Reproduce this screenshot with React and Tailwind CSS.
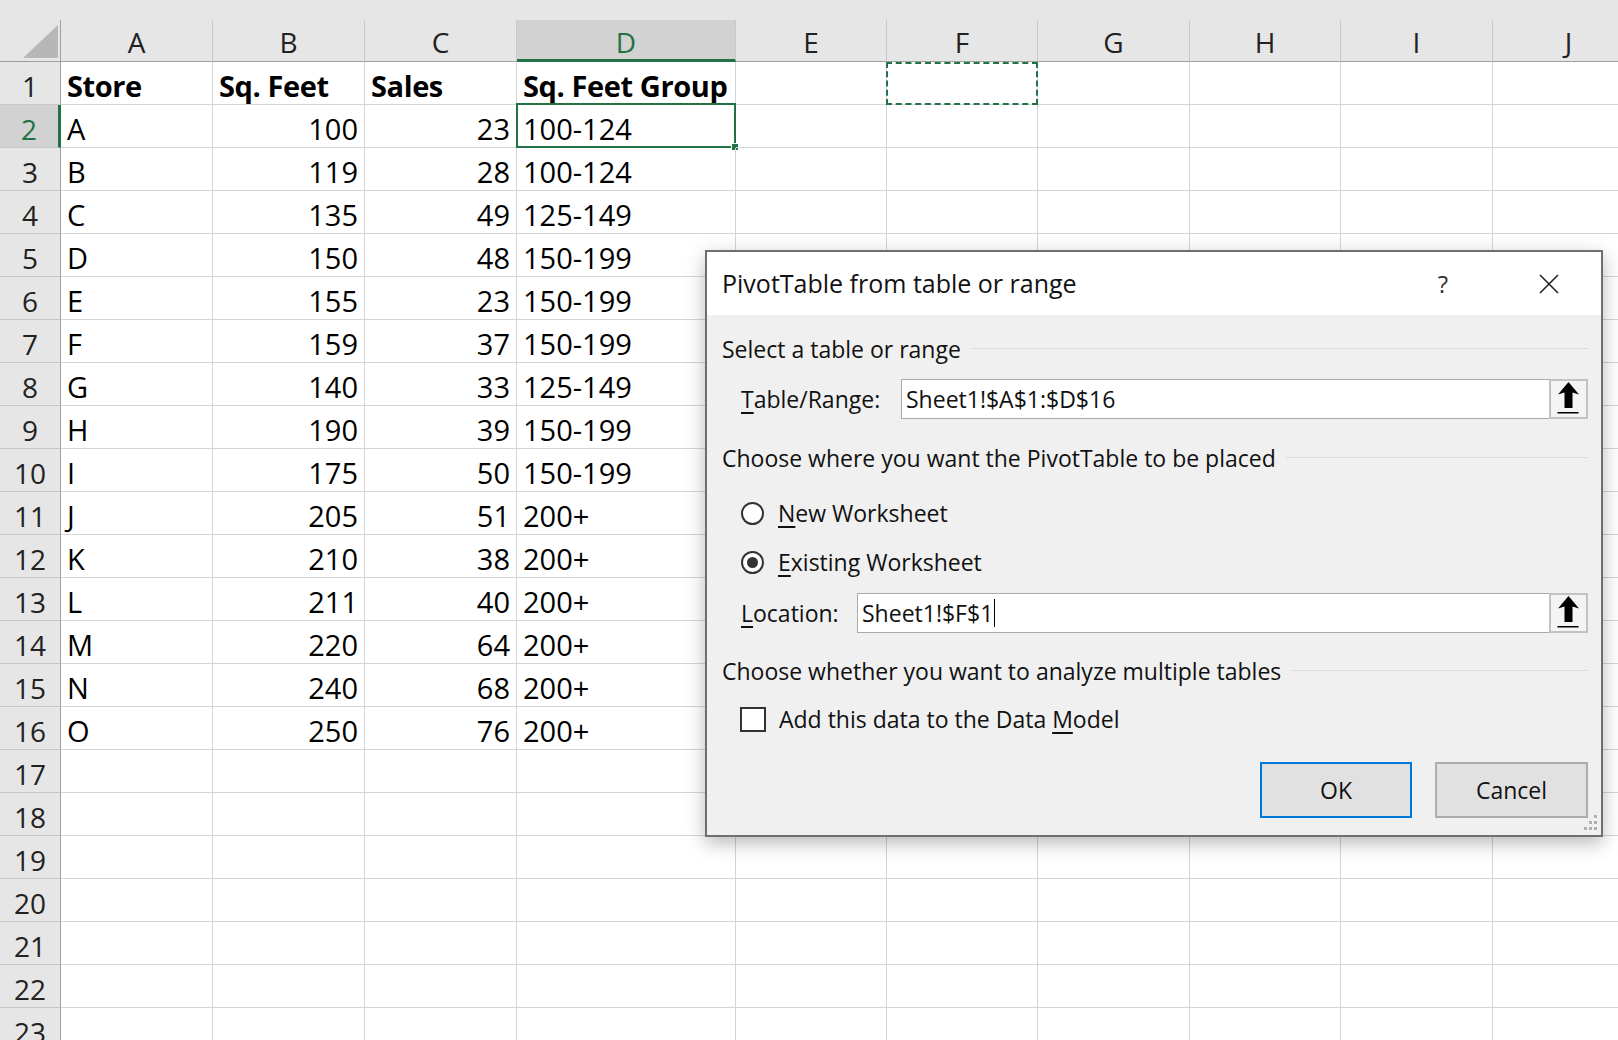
import React from 'react';

const COLS = [
  { l: 'A', w: 'w-[152px]' },
  { l: 'B', w: 'w-[152px]' },
  { l: 'C', w: 'w-[152px]' },
  { l: 'D', w: 'w-[219px]' },
  { l: 'E', w: 'w-[151px]' },
  { l: 'F', w: 'w-[151px]' },
  { l: 'G', w: 'w-[152px]' },
  { l: 'H', w: 'w-[151px]' },
  { l: 'I', w: 'w-[152px]' },
  { l: 'J', w: 'w-[152px]' },
];

const DATA = [
  ['A', 100, 23, '100-124'],
  ['B', 119, 28, '100-124'],
  ['C', 135, 49, '125-149'],
  ['D', 150, 48, '150-199'],
  ['E', 155, 23, '150-199'],
  ['F', 159, 37, '150-199'],
  ['G', 140, 33, '125-149'],
  ['H', 190, 39, '150-199'],
  ['I', 175, 50, '150-199'],
  ['J', 205, 51, '200+'],
  ['K', 210, 38, '200+'],
  ['L', 211, 40, '200+'],
  ['M', 220, 64, '200+'],
  ['N', 240, 68, '200+'],
  ['O', 250, 76, '200+'],
];

const HEAD = ['Store', 'Sq. Feet', 'Sales', 'Sq. Feet Group'];

// builds the 23 visible rows of the sheet
const buildRows = () => {
  const rows = [];
  for (let r = 1; r <= 23; r++) {
    let vals = [];
    if (r === 1) vals = HEAD;
    else if (r <= 16) vals = DATA[r - 2];
    rows.push({ n: r, vals });
  }
  return rows;
};

const Cell = ({ col, value, row, idx }) => {
  const isNum = typeof value === 'number';
  return (
    <div
      className={`${col.w} shrink-0 h-full relative border-r border-b border-[#d4d4d4] flex items-end pb-[4px] px-[6px] ${
        isNum ? 'justify-end' : 'justify-start'
      }`}
    >
      {value !== undefined && (
        <span
          className={`text-[29px] leading-none whitespace-nowrap text-black ${
            row === 1 ? 'font-bold tracking-[-0.4px]' : ''
          }`}
        >
          {value}
        </span>
      )}
      {row === 2 && idx === 3 && (
        <div className="absolute -top-[2px] -left-[1px] -right-[1px] -bottom-[1px] border-2 border-[#217346]">
          <div className="absolute -bottom-[5px] -right-[5px] w-[8px] h-[8px] bg-[#217346] border border-white" />
        </div>
      )}
      {row === 1 && idx === 5 && (
        <div className="absolute -left-[1px] top-[0px] -right-[1px] -bottom-[1px] border-2 border-dashed border-[#217346]" />
      )}
    </div>
  );
};

const UpButton = () => (
  <div className="w-[39px] h-[40px] shrink-0 border-2 border-[#c2c2c2] bg-[#f4f4f4]">
    <svg width="35" height="36" viewBox="0 0 35 36">
      <polygon points="17.5,1 28,13.5 21.5,11.5 21.5,27 13.5,27 13.5,11.5 7,13.5" fill="#000" />
      <rect x="6.5" y="31" width="21" height="1.5" fill="#000" />
    </svg>
  </div>
);

const Section = ({ children }) => (
  <div className="h-[40px] flex items-center">
    <span className="whitespace-nowrap">{children}</span>
    <div className="flex-1 h-px bg-[#dadada] ml-[10px] -mt-[2px]" />
  </div>
);

const Radio = ({ checked }) => (
  <div className="w-[23px] h-[23px] rounded-full border-2 border-[#333] bg-white flex items-center justify-center shrink-0">
    {checked && <div className="w-[11px] h-[11px] rounded-full bg-[#333]" />}
  </div>
);

const Dialog = () => (
  <div className="absolute left-[705px] top-[250px] w-[898px] h-[587px] z-10 border-2 border-[#6f6f6f] bg-[#f0f0f0] shadow-[0_6px_18px_rgba(0,0,0,0.28)] flex flex-col font-['Segoe_UI','Open_Sans',sans-serif] text-[23px] text-[#111]">
    {/* Title bar */}
    <div className="h-[63px] bg-white flex items-center pl-[15px] pr-[32px] shrink-0">
      <div className="flex-1 text-[25px] whitespace-nowrap">PivotTable from table or range</div>
      <div className="w-[40px] text-center text-[24px] text-[#333]">?</div>
      <div className="w-[40px] ml-[66px] flex justify-center">
        <svg width="22" height="22" viewBox="0 0 22 22">
          <path d="M2 2 L20 20 M20 2 L2 20" stroke="#222" strokeWidth="1.6" />
        </svg>
      </div>
    </div>

    <div className="flex flex-col pl-[15px] pr-[13px]">
      <div className="mt-[14px]">
        <Section>Select a table or range</Section>
      </div>

      <div className="mt-[10px] flex items-center h-[40px]">
        <div className="w-[179px] pl-[19px] shrink-0 whitespace-nowrap">
          <u className="underline-offset-[4px]">T</u>able/Range:
        </div>
        <div className="flex-1 h-full bg-white border border-[#a9a9a9] border-r-0 flex items-center pl-[4px]">
          Sheet1!$A$1:$D$16
        </div>
        <UpButton />
      </div>

      <div className="mt-[19px]">
        <Section>Choose where you want the PivotTable to be placed</Section>
      </div>

      <div className="mt-[15px] h-[40px] flex items-center pl-[19px]">
        <Radio />
        <span className="ml-[14px]">
          <u className="underline-offset-[4px]">N</u>ew Worksheet
        </span>
      </div>

      <div className="mt-[9px] h-[40px] flex items-center pl-[19px]">
        <Radio checked />
        <span className="ml-[14px]">
          <u className="underline-offset-[4px]">E</u>xisting Worksheet
        </span>
      </div>

      <div className="mt-[11px] flex items-center h-[40px]">
        <div className="w-[135px] pl-[19px] shrink-0 whitespace-nowrap">
          <u className="underline-offset-[4px]">L</u>ocation:
        </div>
        <div className="flex-1 h-full bg-white border border-[#a9a9a9] border-r-0 flex items-center pl-[4px]">
          Sheet1!$F$1
          <span className="w-px h-[28px] bg-black ml-[1px]" />
        </div>
        <UpButton />
      </div>

      <div className="mt-[18px]">
        <Section>Choose whether you want to analyze multiple tables</Section>
      </div>

      <div className="mt-[8px] h-[40px] flex items-center pl-[18px]">
        <div className="w-[26px] h-[25px] border-2 border-[#333] bg-white shrink-0" />
        <span className="ml-[13px]">
          Add this data to the Data <u className="underline-offset-[4px]">M</u>odel
        </span>
      </div>

      <div className="mt-[23px] flex justify-end gap-[23px]">
        <button className="w-[152px] h-[56px] border-2 border-[#0078d7] bg-[#e1e1e1] text-[23px]">OK</button>
        <button className="w-[153px] h-[56px] border-2 border-[#adadad] bg-[#e1e1e1] text-[23px]">Cancel</button>
      </div>
    </div>

    {/* resize grip */}
    <svg className="absolute right-[2px] bottom-[3px]" width="18" height="18" viewBox="0 0 18 18">
      <rect x="13" y="1" width="3" height="3" fill="#b0b0b0" />
      <rect x="8" y="7" width="3" height="3" fill="#b0b0b0" />
      <rect x="13" y="7" width="3" height="3" fill="#b0b0b0" />
      <rect x="3" y="13" width="3" height="3" fill="#b0b0b0" />
      <rect x="8" y="13" width="3" height="3" fill="#b0b0b0" />
      <rect x="13" y="13" width="3" height="3" fill="#b0b0b0" />
    </svg>
  </div>
);

const App = () => {
  const rows = buildRows();

  return (
    <div className="w-[1618px] h-[1040px] overflow-hidden relative bg-white font-['Segoe_UI','Open_Sans',sans-serif]">
      {/* top strip */}
      <div className="h-[20px] bg-[#e6e6e6]" />

      {/* Column headers */}
      <div className="h-[42px] flex bg-[#e6e6e6]">
        <div className="w-[61px] shrink-0 h-full border-r border-b border-[#9f9f9f] flex items-end justify-end pr-[2px] pb-[3px]">
          <svg width="35" height="33" viewBox="0 0 35 33">
            <polygon points="0,33 35,33 35,0" fill="#b7b7b7" />
          </svg>
        </div>
        {COLS.map((c) => (
          <div
            key={c.l}
            className={`${c.w} shrink-0 h-full border-r border-[#c8c8c8] flex items-end justify-center ${
              c.l === 'D'
                ? 'bg-[#d2d2d2] border-b-[3px] border-b-[#217346] text-[#217346] pb-[3px]'
                : 'border-b border-b-[#9f9f9f] text-[#222] pb-[5px]'
            }`}
          >
            <span className="text-[28px] leading-none">{c.l}</span>
          </div>
        ))}
      </div>

      {/* Grid */}
      {rows.map((row) => (
        <div key={row.n} className="h-[43px] flex">
          <div
            className={`w-[61px] shrink-0 h-full border-b border-[#c8c8c8] flex items-end justify-center pb-[4px] ${
              row.n === 2
                ? 'bg-[#d2d2d2] border-r-[3px] border-r-[#217346] text-[#217346]'
                : 'bg-[#e6e6e6] border-r border-r-[#9f9f9f] text-[#222]'
            }`}
          >
            <span className="text-[28px] leading-none">{row.n}</span>
          </div>
          {COLS.map((c, i) => (
            <Cell key={c.l} col={c} value={row.vals[i]} row={row.n} idx={i} />
          ))}
        </div>
      ))}

      <Dialog />
    </div>
  );
};

export default App;
